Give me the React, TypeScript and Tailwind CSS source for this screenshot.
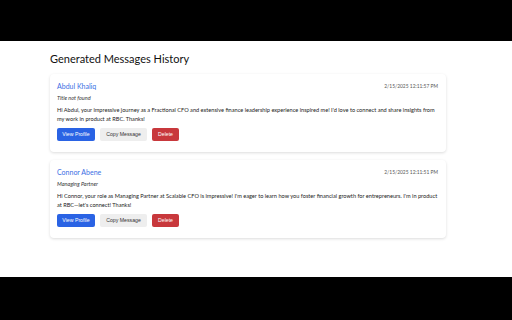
import React from "react";

type Msg = {
  name: string;
  title: string;
  date: string;
  body: string;
};

const messages: Msg[] = [
  {
    name: "Abdul Khaliq",
    title: "Title not found",
    date: "2/15/2025 12:11:57 PM",
    body: "Hi Abdul, your impressive journey as a Fractional CFO and extensive finance leadership experience inspired me! I'd love to connect and share insights from my work in product at RBC. Thanks!",
  },
  {
    name: "Connor Abene",
    title: "Managing Partner",
    date: "2/15/2025 12:11:51 PM",
    body: "Hi Connor, your role as Managing Partner at Scalable CFO is impressive! I'm eager to learn how you foster financial growth for entrepreneurs. I'm in product at RBC\u2014let's connect! Thanks!",
  },
];

const MessageCard = ({ m }: { m: Msg }) => {
  return (
    <div className="h-[78px] rounded-[4px] bg-white px-[7px] pt-[7px] shadow-[0_1px_3px_rgba(0,0,0,0.14)]">
      <div className="flex items-start justify-between">
        <span className="text-[7px] leading-[10px] text-[#3b6fe4]">{m.name}</span>
        <span className="mr-[1px] mt-[1px] text-[4.9px] leading-[8px] text-[#555]">{m.date}</span>
      </div>
      <div className="mt-[3px] text-[5.5px] italic leading-[8px] text-[#333]">{m.title}</div>
      <p className="mt-[3px] w-[382px] text-[5.62px] leading-[9px] text-[#222]">{m.body}</p>
      <div className="mt-[5px] flex gap-[5px] font-['Liberation_Sans',sans-serif] text-[5.2px]">
        <button className="h-[13px] w-[38px] rounded-[2px] bg-[#2a63e4] text-white">View Profile</button>
        <button className="h-[13px] w-[47px] rounded-[2px] bg-[#eeeeee] text-[#333]">Copy Message</button>
        <button className="h-[13px] w-[27px] rounded-[2px] bg-[#c8383c] text-white">Delete</button>
      </div>
    </div>
  );
};

const App = () => {
  return (
    <div className="flex h-[320px] w-[512px] flex-col bg-black font-['Lato',sans-serif]">
      <div className="h-[41px]" />
      <div className="h-[236px] bg-white pl-[50px] pt-[10px]">
        <h1 className="text-[11px] leading-[15px] text-[#111]">Generated Messages History</h1>
        <div className="mt-[8px] flex w-[396px] flex-col gap-[8px]">
          {messages.map((m) => (
            <MessageCard key={m.name} m={m} />
          ))}
        </div>
      </div>
    </div>
  );
};

export default App;
